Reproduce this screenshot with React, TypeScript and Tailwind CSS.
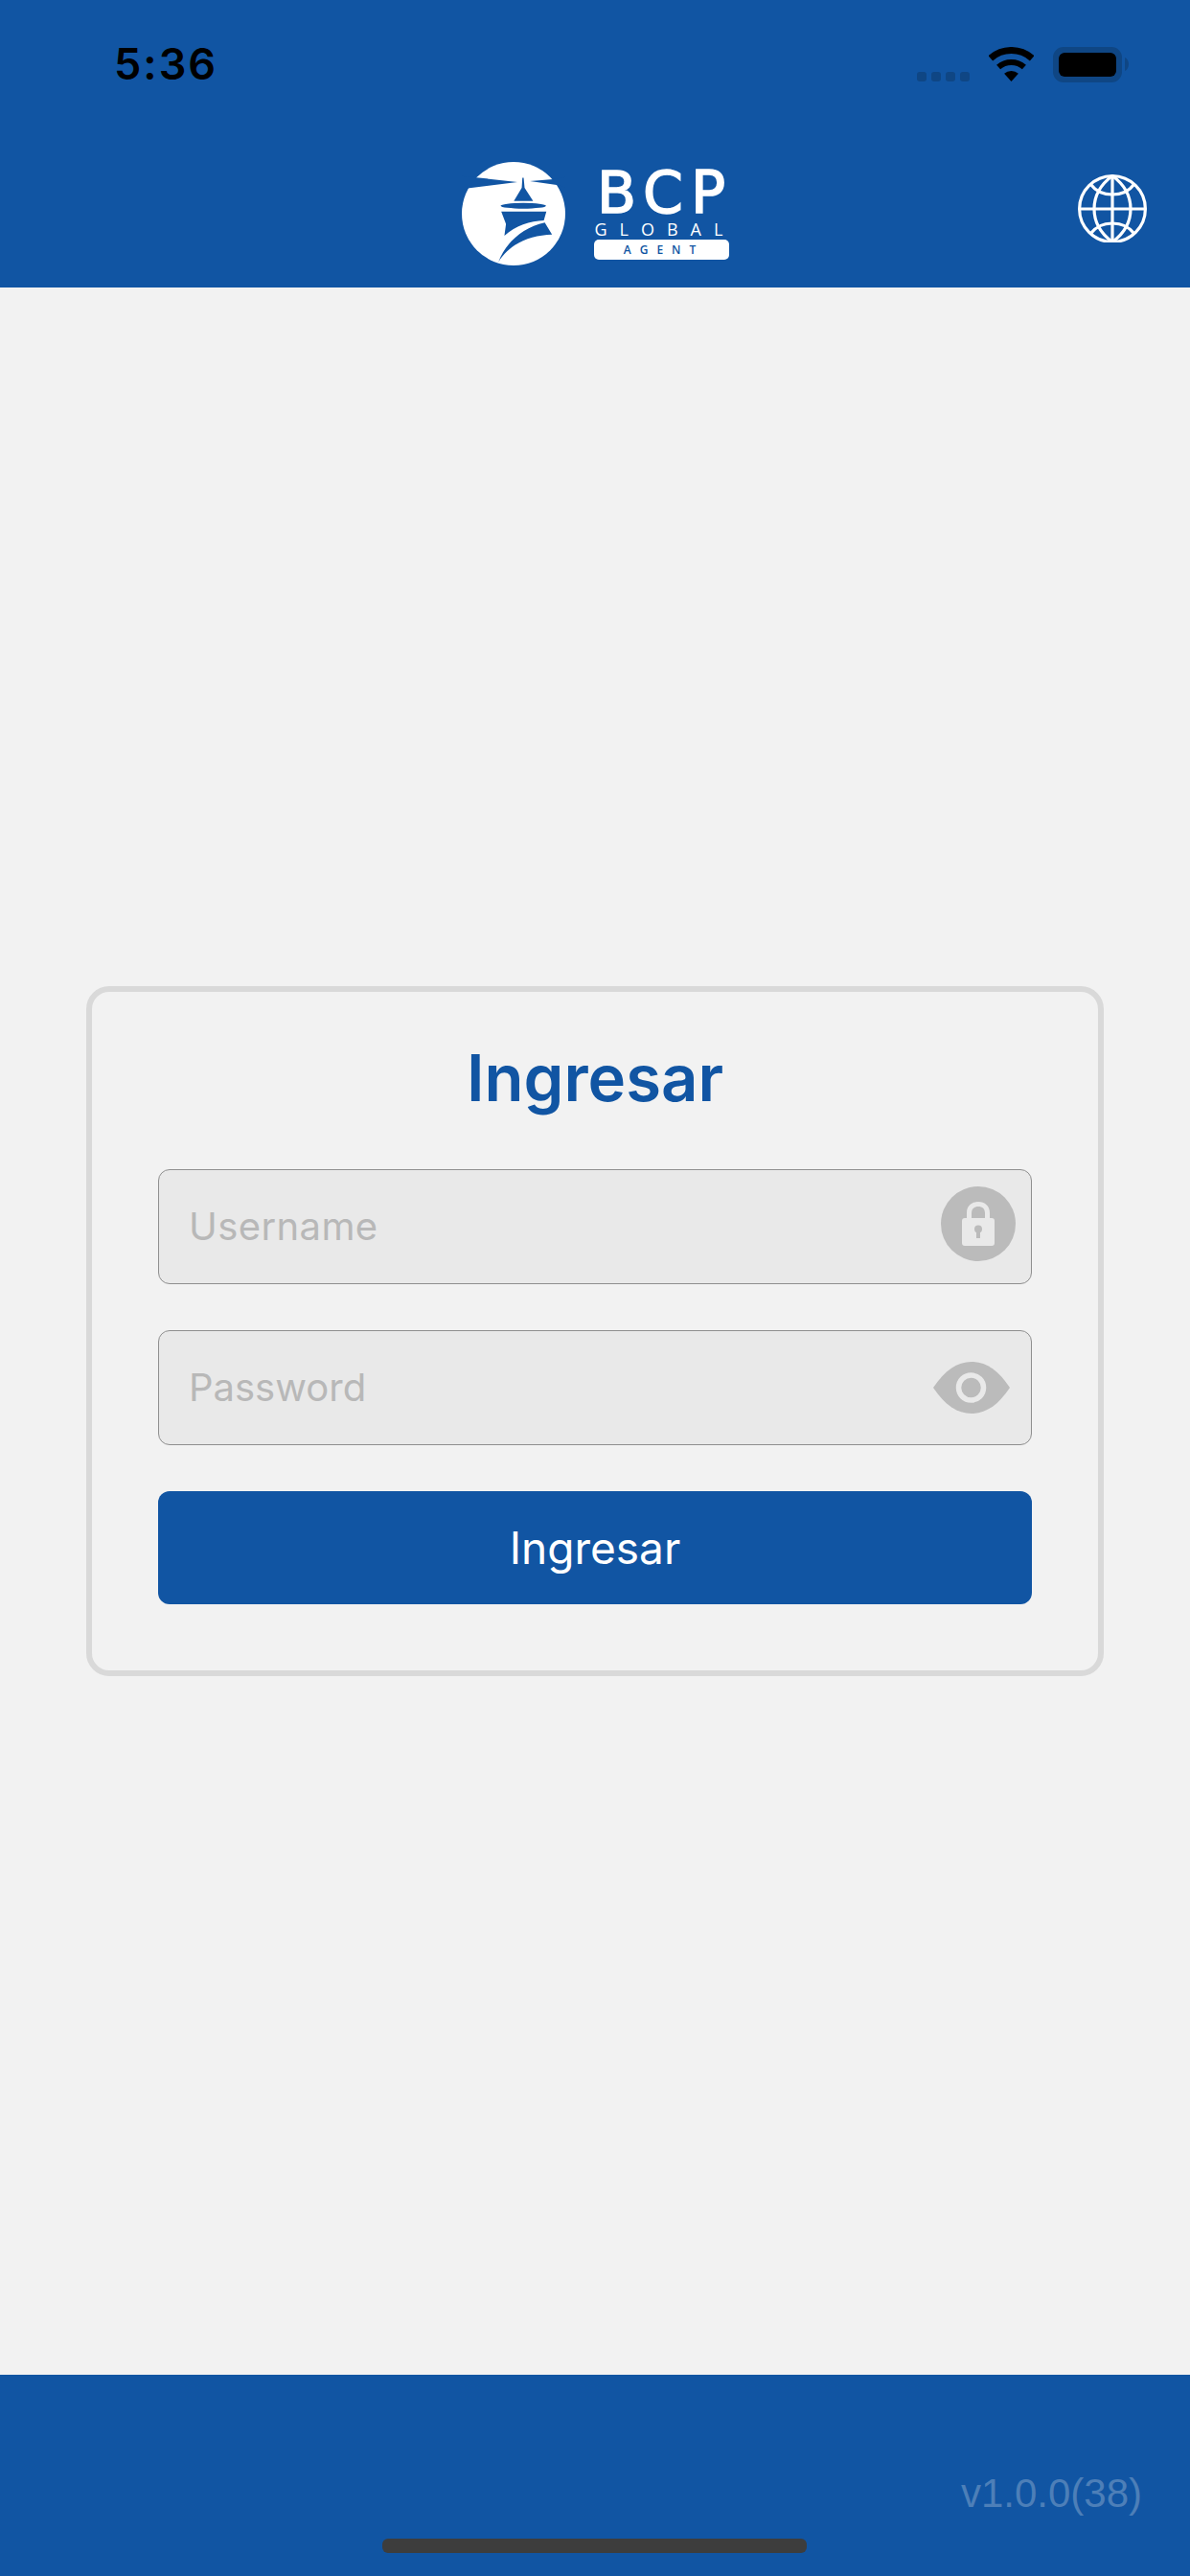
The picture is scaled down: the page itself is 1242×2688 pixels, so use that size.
export default function App() {
  return (
    <div className="relative flex h-[2688px] w-[1242px] flex-col overflow-hidden bg-[#f2f2f2] font-['Inter',sans-serif]">
      <header className="flex h-[300px] flex-col bg-[#1155a3]">
        <div className="flex h-[168px] items-start pl-[119px] pr-[64px]">
          <span className="mt-[41px] text-[45px] leading-[52px] font-semibold tracking-[2px] text-black">5:36</span>
          <div className="ml-auto flex items-start pt-[49px]">
            <div className="mt-[26px] mr-[20px] flex gap-[5px]">
              <span className="h-[10px] w-[10px] rounded-[3px] bg-[#0f4684]" />
              <span className="h-[10px] w-[10px] rounded-[3px] bg-[#0f4684]" />
              <span className="h-[10px] w-[10px] rounded-[3px] bg-[#0f4684]" />
              <span className="h-[10px] w-[10px] rounded-[3px] bg-[#0f4684]" />
            </div>
            <svg width="47" height="36" viewBox="0 0 47 36" className="mr-[20px]">
              <path d="M1.8 11.8A32.5 32.5 0 0 1 45.2 11.8" fill="none" stroke="#000" strokeWidth="7" />
              <path d="M10.1 21.1A20 20 0 0 1 36.9 21.1" fill="none" stroke="#000" strokeWidth="6" />
              <path d="M23.5 36L16.1 27.8A11 11 0 0 1 30.9 27.8Z" fill="#000" />
            </svg>
            <div className="h-[37px] w-[72px] rounded-[11px] border-[6px] border-[#0f4684] bg-[#1155a3] p-0">
              <div className="h-full w-full rounded-[6px] bg-black" />
            </div>
            <svg width="7" height="14" viewBox="0 0 7 14" className="mt-[11px]">
              <path d="M3 0C5.5 1 7 4 7 7S5.5 13 3 14Z" fill="#0f4684" />
            </svg>
          </div>
        </div>
        <div className="relative flex items-start justify-center gap-[30px]">
          <svg width="108" height="110" viewBox="12 12 328 330">
            <circle cx="176" cy="177" r="164" fill="#fff" />
            <g fill="#1155a3">
              <path d="M188 77L58 62L10 58L10 102L36 96Z" />
              <path d="M228 74L302 68L345 60L345 96L318 87Z" />
              <path d="M204 63H208L211 95L238 137H177L202 95Z" />
              <ellipse cx="207" cy="152" rx="72" ry="9" />
              <path d="M137 170H280L272 198C230 200 180 215 147 247L152 210Z" />
              <path d="M275 205L298 243C230 245 165 270 128 330C150 270 205 220 275 205Z" />
            </g>
          </svg>
          <div className="flex w-[141px] flex-col items-center text-white font-['Open_Sans',sans-serif]">
            <span className="mt-[5px] h-[56px] pl-[8px] font-['DejaVu_Sans',sans-serif] text-[60px] leading-[56px] tracking-[8px] [-webkit-text-stroke:1.5px_white]">BCP</span>
            <span className="h-[20px] w-[141px] pl-[1px] text-[18px] leading-[20px] font-medium tracking-[13px] whitespace-nowrap">GLOBAL</span>
            <div className="mt-[1px] flex h-[21px] w-full items-center justify-center rounded-[5px] bg-white pl-[6px] text-[12px] leading-[21px] font-semibold tracking-[9px] text-[#1155a3]">AGENT</div>
          </div>
          <svg width="72" height="71" viewBox="0 0 72 71" className="absolute top-[14px] right-[45px]" fill="none" stroke="#fff" strokeWidth="3.2">
            <circle cx="36" cy="36" r="34.4" />
            <path d="M36 1.5V70.5M1.5 36H70.5" />
            <path d="M36 1.5C23 11 17 23 17 36S23 61 36 70.5C49 61 55 49 55 36S49 11 36 1.5Z" />
            <path d="M13 10C19 18 27 21 36 21S53 18 59 10" />
            <path d="M13 62C19 54 27 51 36 51S53 54 59 62" />
          </svg>
        </div>
      </header>

      <main className="flex flex-1 items-center justify-center">
        <div className="flex h-[720px] w-[1062px] flex-col rounded-[24px] border-[6px] border-[#d9d9d9] px-[69px]">
          <h1 className="mt-[47px] h-[138px] text-center text-[67px] leading-[85px] font-semibold text-[#1155a3]">Ingresar</h1>
          <div className="flex h-[120px] items-center justify-between rounded-[12px] border-[1.5px] border-[#8f8f8f] bg-[#e9e9e9] pr-[16px] pl-[31px]">
            <span className="text-[40px] leading-[48px] tracking-[0.4px] text-[#b8b8b8]">Username</span>
            <svg width="78" height="78" viewBox="0 0 78 78" className="mb-[6px]">
              <circle cx="39" cy="39" r="39" fill="#bbbbbb" />
              <path d="M27 34V27.5C27 20.5 32 16 39 16S51 20.5 51 27.5V34H46V28C46 23.5 43.5 21 39 21S32 23.5 32 28V34Z" fill="#e9e9e9" />
              <rect x="22" y="33" width="34" height="29" rx="3" fill="#e9e9e9" />
              <circle cx="39" cy="44.5" r="4" fill="#bbbbbb" />
              <rect x="37" y="45" width="4" height="9" fill="#bbbbbb" />
            </svg>
          </div>
          <div className="mt-[48px] flex h-[120px] items-center justify-between rounded-[12px] border-[1.5px] border-[#8f8f8f] bg-[#e9e9e9] pr-[22px] pl-[31px]">
            <span className="text-[40px] leading-[48px] text-[#b8b8b8]">Password</span>
            <svg width="80" height="54" viewBox="0 0 80 54">
              <path d="M0 27C12 9 25 0 40 0S68 9 80 27C68 45 55 54 40 54S12 45 0 27Z" fill="#bbbbbb" />
              <circle cx="39.5" cy="27" r="13" fill="none" stroke="#e9e9e9" strokeWidth="5.5" />
            </svg>
          </div>
          <button className="mt-[48px] flex h-[118px] items-center justify-center rounded-[12px] bg-[#1155a3] text-[46px] leading-[56px] text-white">Ingresar</button>
        </div>
      </main>

      <footer className="flex h-[210px] flex-col items-end bg-[#1155a3] pt-[100px] pr-[50px]">
        <span className="font-['Liberation_Sans',sans-serif] text-[42px] leading-[48px] text-[#4d7fb8]">v1.0.0(38)</span>
      </footer>
      <div className="absolute bottom-[24px] left-[399px] h-[15px] w-[443px] rounded-[6px] bg-[#3d3d3d]" />
    </div>
  );
}
